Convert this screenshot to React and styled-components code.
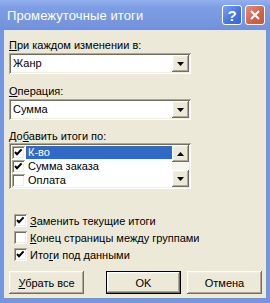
import React from "react";
import styled, { createGlobalStyle } from "styled-components";

const GlobalStyle = createGlobalStyle`
  html, body {
    margin: 0;
    padding: 0;
    background: #ece9d8;
  }
  body {
    font-family: "Liberation Sans", Arial, sans-serif;
    font-size: 11px;
    color: #000;
  }
`;

const raised = `
  box-shadow: inset -1px -1px #716f64, inset 1px 1px #fff,
    inset -2px -2px #aca899, inset 2px 2px #f1efe2;
`;

const sunken = `
  box-shadow: inset 1px 1px #aca899, inset -1px -1px #fff,
    inset 2px 2px #716f64, inset -2px -2px #f1efe2;
`;

const Window = styled.div`
  width: 270px;
  height: 303px;
  box-sizing: border-box;
  display: flex;
  flex-direction: column;
  background: #7596de;
  padding: 0 4px 5px 4px;
`;

const TitleBar = styled.div`
  height: 30px;
  margin: 0 -4px;
  padding: 0 5px 0 7px;
  display: flex;
  align-items: center;
  background: linear-gradient(#93b0ee, #7d9de4 25%, #7596de 80%, #7090da);
`;

const Title = styled.div`
  flex: 1;
  color: #fff;
  font-size: 13px;
  letter-spacing: 0.1px;
`;

const CaptionButton = styled.div`
  width: 20px;
  height: 20px;
  margin-left: 3px;
  box-sizing: border-box;
  border: 1px solid #fff;
  border-radius: 3px;
  display: flex;
  align-items: center;
  justify-content: center;
  color: #fff;
  font-weight: bold;
  font-size: 15px;
  background: ${(p) =>
    p.$close
      ? "linear-gradient(135deg, #e58c78, #d2624a 60%, #c25640)"
      : "linear-gradient(135deg, #7aa0f0, #4474e0 60%, #3a66d2)"};
`;

const Body = styled.div`
  flex: 1;
  background: #ece9d8;
  padding: 9px 4px 0 5px;
  display: flex;
  flex-direction: column;
`;

const Label = styled.div`
  line-height: 13px;
  height: 13px;
  margin-top: ${(p) => p.$gap || 0}px;
  white-space: nowrap;
`;

const Combo = styled.div`
  width: 182px;
  height: 21px;
  margin-top: 1px;
  box-sizing: border-box;
  padding: 2px;
  background: #fff;
  display: flex;
  ${sunken}
`;

const ComboText = styled.div`
  flex: 1;
  padding-left: 2px;
  line-height: 17px;
`;

const ArrowButton = styled.div`
  width: 17px;
  height: 17px;
  box-sizing: border-box;
  background: #ece9d8;
  display: flex;
  align-items: center;
  justify-content: center;
  ${raised}
`;

const ListBox = styled.div`
  width: 182px;
  height: 46px;
  box-sizing: border-box;
  padding: 2px;
  background: #fff;
  display: flex;
  ${sunken}
`;

const ListRows = styled.div`
  flex: 1;
  display: flex;
  flex-direction: column;
`;

const ListRow = styled.div`
  height: 14px;
  display: flex;
  align-items: center;
  padding-left: 1px;
`;

const ListText = styled.div`
  flex: 1;
  height: 13px;
  line-height: 13px;
  margin-left: 1px;
  padding-left: 2px;
  background: ${(p) => (p.$selected ? "#316ac5" : "transparent")};
  color: ${(p) => (p.$selected ? "#fff" : "#000")};
`;

const ScrollBar = styled.div`
  width: 17px;
  display: flex;
  flex-direction: column;
`;

const Track = styled.div`
  flex: 1;
  background: #f6f5f0;
`;

const Box = styled.span`
  width: 13px;
  height: 13px;
  flex: none;
  box-sizing: border-box;
  background: #fff;
  display: flex;
  align-items: center;
  justify-content: center;
  ${sunken}
`;

const Options = styled.div`
  margin-top: 23px;
  display: flex;
  flex-direction: column;
`;

const OptionRow = styled.div`
  height: 17px;
  display: flex;
  align-items: center;
  padding-left: 5px;
  gap: 3px;
  white-space: nowrap;
`;

const ButtonRow = styled.div`
  margin-top: 8px;
  display: flex;
`;

const Button = styled.div`
  width: 75px;
  height: 23px;
  box-sizing: border-box;
  display: flex;
  align-items: center;
  justify-content: center;
  background: #ece9d8;
  margin-left: ${(p) => p.$gap || 0}px;
  ${(p) =>
    p.$default
      ? `box-shadow: inset 0 0 0 1px #000, inset -2px -2px #716f64, inset 2px 2px #fff,
          inset -3px -3px #aca899, inset 3px 3px #f1efe2;`
      : raised}
`;

const Check = () => (
  <svg width="9" height="9" viewBox="0 0 9 9">
    <polyline points="1,4 3,6.2 7.6,1.4" fill="none" stroke="#000" strokeWidth="2" />
  </svg>
);

const CheckBox = ({ checked }) => <Box>{checked && <Check />}</Box>;

const Arrow = ({ up }) => (
  <svg width="7" height="4" viewBox="0 0 7 4">
    <polygon points={up ? "3.5,0 7,4 0,4" : "0,0 7,0 3.5,4"} fill="#000" />
  </svg>
);

const items = [
  { name: "К-во", checked: true, selected: true },
  { name: "Сумма заказа", checked: true },
  { name: "Оплата", checked: false },
];

export default function App() {
  return (
    <>
      <GlobalStyle />
      <Window>
        <TitleBar>
          <Title>Промежуточные итоги</Title>
          <CaptionButton>?</CaptionButton>
          <CaptionButton $close>
            <svg width="10" height="10" viewBox="0 0 10 10">
              <path d="M1 1 L9 9 M9 1 L1 9" stroke="#fff" strokeWidth="2" />
            </svg>
          </CaptionButton>
        </TitleBar>
        <Body>
          <Label>
            <u>П</u>ри каждом изменении в:
          </Label>
          <Combo>
            <ComboText>Жанр</ComboText>
            <ArrowButton>
              <Arrow />
            </ArrowButton>
          </Combo>

          <Label $gap={11}>
            <u>О</u>перация:
          </Label>
          <Combo>
            <ComboText>Сумма</ComboText>
            <ArrowButton>
              <Arrow />
            </ArrowButton>
          </Combo>

          <Label $gap={10}>
            До<u>б</u>авить итоги по:
          </Label>
          <ListBox>
            <ListRows>
              {items.map((it) => (
                <ListRow key={it.name}>
                  <CheckBox checked={it.checked} />
                  <ListText $selected={it.selected}>{it.name}</ListText>
                </ListRow>
              ))}
            </ListRows>
            <ScrollBar>
              <ArrowButton>
                <Arrow up />
              </ArrowButton>
              <Track />
              <ArrowButton>
                <Arrow />
              </ArrowButton>
            </ScrollBar>
          </ListBox>

          <Options>
            <OptionRow>
              <CheckBox checked />
              <span>
                <u>З</u>аменить текущие итоги
              </span>
            </OptionRow>
            <OptionRow>
              <CheckBox />
              <span>
                <u>К</u>онец страницы между группами
              </span>
            </OptionRow>
            <OptionRow>
              <CheckBox checked />
              <span>
                Ито<u>г</u>и под данными
              </span>
            </OptionRow>
          </Options>

          <ButtonRow>
            <Button>
              <span>
                <u>У</u>брать все
              </span>
            </Button>
            <Button $default $gap={22}>
              OK
            </Button>
            <Button $gap={6}>Отмена</Button>
          </ButtonRow>
        </Body>
      </Window>
    </>
  );
}
